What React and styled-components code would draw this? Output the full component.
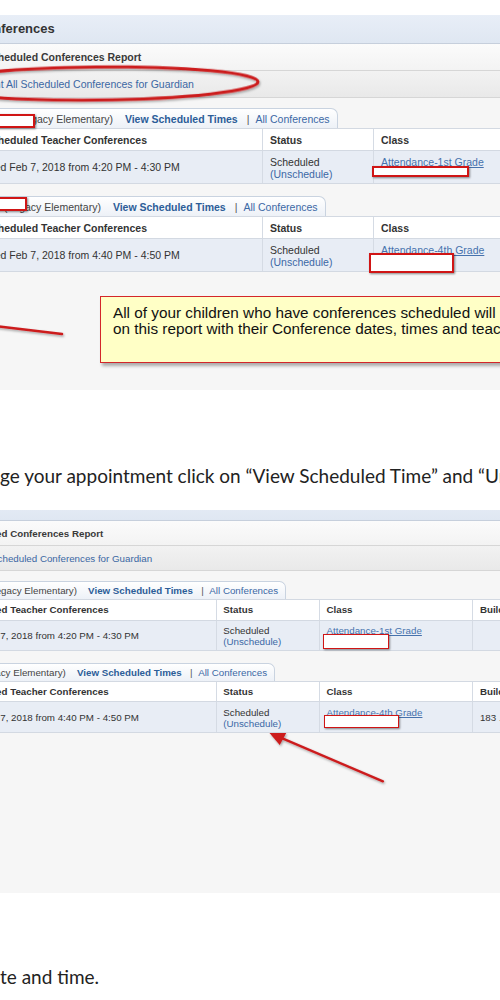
import React from 'react';
import styled, { createGlobalStyle } from 'styled-components';

const GlobalStyle = createGlobalStyle`
  *, *::before, *::after { box-sizing: border-box; }
  html, body { margin: 0; padding: 0; background: #fff; }
`;

const Page = styled.div`
  width: 500px;
  height: 1000px;
  overflow: hidden;
  display: flex;
  flex-direction: column;
  background: #fff;
`;

const ShotFrame = styled.div`
  flex: none;
  height: ${(p) => p.$h}px;
  margin-top: ${(p) => p.$mt}px;
  overflow: hidden;
  background: #f6f6f6;
`;

const Shot = styled.div`
  position: relative;
  zoom: ${(p) => p.$zoom};
  margin-left: -${(p) => p.$clipX}px;
  margin-top: -${(p) => p.$clipY}px;
  width: 780px;
  min-height: 480px;
  font-family: "Liberation Sans", Arial, sans-serif;
  font-size: 10.5px;
  color: #333;
`;

const TitleBar = styled.div`
  height: 29px;
  display: flex;
  align-items: center;
  padding: 0 0 2px 6px;
  background: linear-gradient(#e8eef7, #dfe7f2);
  border-bottom: 1px solid #c6cfdc;
  font-size: 13px;
  font-weight: bold;
  color: #333;
`;

const BarRow = styled.div`
  height: 27px;
  display: flex;
  align-items: center;
  padding-left: ${(p) => p.$indent}px;
  background: ${(p) => (p.$shade ? 'linear-gradient(#f2f2f2, #e9e9e9)' : 'linear-gradient(#fbfbfb, #f3f3f3)')};
  border-bottom: 1px solid #d6d6d6;
  font-weight: ${(p) => (p.$bold ? 'bold' : 'normal')};
  color: ${(p) => (p.$link ? '#3b67a3' : '#3a3a3a')};
`;

const Body = styled.div`
  padding-top: 10px;
  display: flex;
  flex-direction: column;
`;

const Section = styled.div`
  display: flex;
  flex-direction: column;
  margin-top: ${(p) => (p.$first ? 0 : 12)}px;
`;

const TabRow = styled.div`
  height: 20px;
  display: flex;
`;

const Tab = styled.div`
  display: flex;
  align-items: center;
  padding: 0 7px 0 8px;
  border: 1px solid #c9d3e0;
  border-left: none;
  border-bottom: none;
  border-top-right-radius: 7px;
  background: linear-gradient(#ffffff, #edf1f7);
  white-space: nowrap;
`;

const NameSlot = styled.span`
  position: relative;
  display: inline-block;
  width: ${(p) => p.$w}px;
  align-self: stretch;
`;

const School = styled.span`
  color: #444;
  margin-right: 12px;
`;

const TabLink = styled.span`
  color: ${(p) => (p.$bold ? '#2c5d98' : '#3b68a5')};
  font-weight: ${(p) => (p.$bold ? 'bold' : 'normal')};
`;

const Sep = styled.span`
  color: #555;
  margin: 0 6px 0 9px;
`;

const Redact = styled.span`
  position: absolute;
  left: ${(p) => p.$l}px;
  top: ${(p) => p.$t}px;
  width: ${(p) => p.$w}px;
  height: ${(p) => p.$h}px;
  background: #fff;
  border: 2px solid #d01515;
  box-shadow: 1px 1px 2px rgba(0, 0, 0, 0.45);
  z-index: 2;
`;

const Grid = styled.div`
  display: grid;
  grid-template-columns: 292px 111px 165px 1fr;
  height: ${(p) => (p.$head ? 23 : 33)}px;
  background: ${(p) => (p.$head ? '#ffffff' : '#e8edf5')};
  border-top: ${(p) => (p.$head ? '1px solid #d3d9e2' : 'none')};
  border-bottom: 1px solid #d3d9e2;
  font-weight: ${(p) => (p.$head ? 'bold' : 'normal')};
`;

const Cell = styled.div`
  position: relative;
  display: flex;
  flex-direction: column;
  justify-content: ${(p) => (p.$top ? 'flex-start' : 'center')};
  padding: ${(p) => (p.$top ? 5 : 0)}px 6px 0 ${(p) => (p.$first ? 15 : 7)}px;
  border-left: ${(p) => (p.$first ? 'none' : '1px solid #d5dbe4')};
  line-height: 12px;
  white-space: nowrap;
  color: #333;
`;

const CellLink = styled.span`
  color: ${(p) => (p.$under ? '#4672ad' : '#3b68a5')};
  text-decoration: ${(p) => (p.$under ? 'underline' : 'none')};
`;

const Note = styled.div`
  margin: 24px 0 0 130px;
  width: 440px;
  height: 67px;
  padding: 8px 12px;
  background: #ffffc6;
  border: 1px solid #d3262a;
  box-shadow: 2px 3px 3px rgba(0, 0, 0, 0.3);
  font-size: 15.3px;
  line-height: 16px;
  color: #111;
  white-space: nowrap;
`;

const Overlay = styled.svg`
  position: absolute;
  left: 0;
  top: 0;
  pointer-events: none;
  overflow: visible;
  z-index: 3;
`;

const DocLine = styled.p`
  flex: none;
  margin: ${(p) => p.$mt}px 0 0 0;
  height: 24px;
  line-height: 24px;
  font-family: Lato, "Open Sans", sans-serif;
  font-size: 19px;
  color: #222;
  white-space: nowrap;
  overflow: hidden;
`;

const kids = [
  {
    nameW: 38,
    date: 'Wed Feb 7, 2018 from 4:20 PM - 4:30 PM',
    cls: 'Attendance-1st Grade',
    building: '',
  },
  {
    nameW: 26,
    date: 'Wed Feb 7, 2018 from 4:40 PM - 4:50 PM',
    cls: 'Attendance-4th Grade',
    building: '183 .',
  },
];

function ChildSection({ kid, first, tabRedact, clsRedact }) {
  return (
    <Section $first={first}>
      <TabRow>
        <Tab>
          <NameSlot $w={kid.nameW}>
            {tabRedact && <Redact $l={tabRedact.l} $t={tabRedact.t} $w={tabRedact.w} $h={tabRedact.h} />}
          </NameSlot>
          <School>(Legacy Elementary)</School>
          <TabLink $bold>View Scheduled Times</TabLink>
          <Sep>|</Sep>
          <TabLink>All Conferences</TabLink>
        </Tab>
      </TabRow>
      <Grid $head>
        <Cell $first>Scheduled Teacher Conferences</Cell>
        <Cell>Status</Cell>
        <Cell>Class</Cell>
        <Cell>Building</Cell>
      </Grid>
      <Grid>
        <Cell $first>{kid.date}</Cell>
        <Cell $top>
          <span>Scheduled</span>
          <CellLink>(Unschedule)</CellLink>
        </Cell>
        <Cell $top>
          <CellLink $under>{kid.cls}</CellLink>
          {clsRedact && <Redact $l={clsRedact.l} $t={clsRedact.t} $w={clsRedact.w} $h={clsRedact.h} />}
        </Cell>
        <Cell>{kid.building}</Cell>
      </Grid>
    </Section>
  );
}

function ReportShot({ redactions, children }) {
  return (
    <>
      <TitleBar>Conferences</TitleBar>
      <BarRow $indent={15} $bold>Scheduled Conferences Report</BarRow>
      <BarRow $indent={12} $shade $link>Print All Scheduled Conferences for Guardian</BarRow>
      <Body>
        {kids.map((k, i) => (
          <ChildSection
            key={i}
            kid={k}
            first={i === 0}
            tabRedact={redactions.tab[i]}
            clsRedact={redactions.cls[i]}
          />
        ))}
        {children}
      </Body>
    </>
  );
}

const shot1Redactions = {
  tab: [
    { l: -6, t: 5, w: 63, h: 14 },
    { l: -6, t: 0, w: 55, h: 14 },
  ],
  cls: [
    { l: -2, t: 15, w: 97, h: 11 },
    { l: -5, t: 14, w: 85, h: 20 },
  ],
};

const shot2Redactions = {
  tab: [null, null],
  cls: [
    { l: 3, t: 14, w: 71, h: 16 },
    { l: 4, t: 13, w: 81, h: 14 },
  ],
};

export default function App() {
  return (
    <Page>
      <GlobalStyle />
      <ShotFrame $h={375} $mt={15}>
        <Shot $zoom={1} $clipX={30} $clipY={0}>
          <ReportShot redactions={shot1Redactions}>
            <Note>
              All of your children who have conferences scheduled will appear
              <br />
              on this report with their Conference dates, times and teachers.
            </Note>
          </ReportShot>
          <Overlay width="780" height="375">
            <defs>
              <filter id="sh1" x="-10%" y="-50%" width="120%" height="200%">
                <feDropShadow dx="1" dy="1.5" stdDeviation="1" floodColor="#000" floodOpacity="0.35" />
              </filter>
            </defs>
            <ellipse cx="126" cy="68.5" rx="162" ry="16.5" fill="none" stroke="#cc1b1f" strokeWidth="3" filter="url(#sh1)" transform="rotate(-0.6 126 68.5)" />
            <line x1="0" y1="308" x2="92" y2="319" stroke="#cc1b1f" strokeWidth="2.5" strokeLinecap="round" filter="url(#sh1)" />
          </Overlay>
        </Shot>
      </ShotFrame>

      <DocLine $mt={74}>ge your appointment click on “View Scheduled Time” and “Unschedule”</DocLine>

      <ShotFrame $h={383} $mt={22}>
        <Shot $zoom={0.93} $clipX={60} $clipY={17}>
          <ReportShot redactions={shot2Redactions} />
          <Overlay width="780" height="460">
            <defs>
              <filter id="sh2" x="-10%" y="-50%" width="120%" height="200%">
                <feDropShadow dx="1" dy="1.5" stdDeviation="1" floodColor="#000" floodOpacity="0.35" />
              </filter>
            </defs>
            <g filter="url(#sh2)">
              <line x1="472" y1="309" x2="362" y2="262" stroke="#cc1b1f" strokeWidth="2.5" strokeLinecap="round" />
              <polygon points="350,257 368,257 361,270" fill="#cc1b1f" />
            </g>
          </Overlay>
        </Shot>
      </ShotFrame>

      <DocLine $mt={72}>te and time.</DocLine>
    </Page>
  );
}
